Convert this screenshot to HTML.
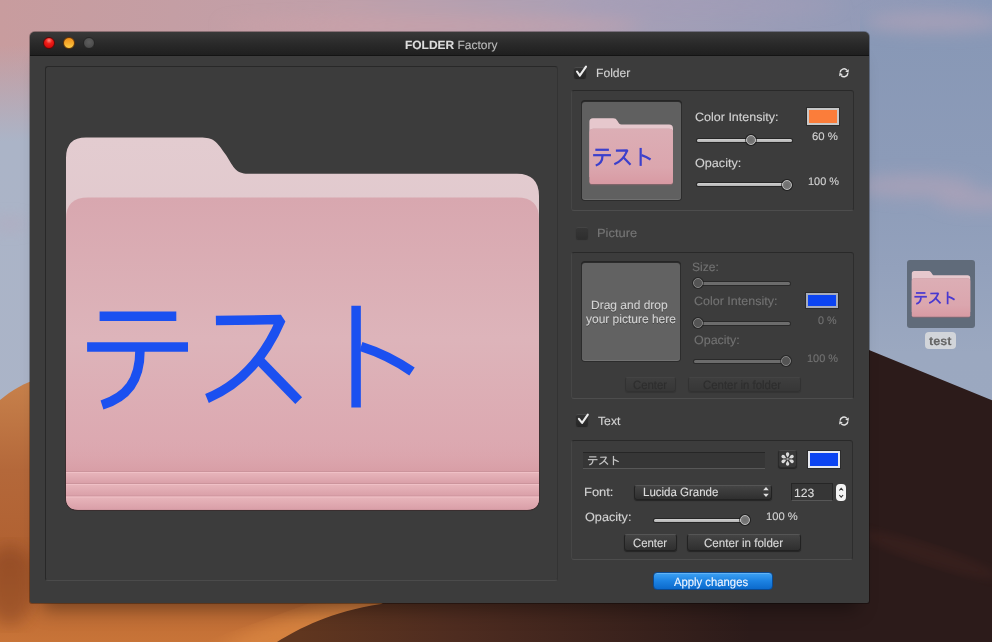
<!DOCTYPE html>
<html><head><meta charset="utf-8">
<style>
*{box-sizing:border-box;margin:0;padding:0}
html,body{width:992px;height:642px;overflow:hidden;background:#8a96b0}
body{position:relative;font-family:"Liberation Sans",sans-serif}
div{position:absolute}
.t{white-space:nowrap;text-rendering:geometricPrecision;-webkit-text-stroke:.12px currentColor}
#win{left:30px;top:32px;width:839px;height:571px;border-radius:5px 5px 2px 2px;overflow:hidden;background-color:#3c3c3c;box-shadow:0 0 0 1px rgba(0,0,0,.3),0 18px 18px -12px rgba(0,0,0,.38)}
#tb{left:0;top:0;width:839px;height:24px;background:linear-gradient(#393939,#2a2a2a 50%,#1f1f1f);border-bottom:1px solid #141414}
.tl{width:12px;height:12px;border-radius:50%;top:5px}
.grp{border:1px solid #282828;border-right-color:#333;border-bottom-color:#4b4b4b;border-radius:3px}
.grp2{border:1px solid #292929;border-right-color:#2d2d2d;border-left-color:#464646;border-bottom-color:#4d4d4d;border-radius:3px}
.cb{border-radius:2px;background:linear-gradient(#333,#262626);border-top:1px solid #4a4a4a;box-shadow:0 1px 1px rgba(0,0,0,.4)}
.btn{border-radius:3px;background:linear-gradient(#444,#2f2f2f);border:1px solid #222;border-top-color:#555;box-shadow:0 1px 1px rgba(0,0,0,.4)}
.track{height:3px;border-radius:2px;background:linear-gradient(#d0d0d0,#b4b4b4);box-shadow:0 0 0 1px rgba(20,20,20,.55)}
.knob{width:10px;height:10px;border-radius:50%;background:radial-gradient(circle at 50% 50%,#6c6c6c,#808080);border:1.5px solid #bdbdbd;box-shadow:0 0 0 1px rgba(20,20,20,.7)}
.sw{border:2px solid #c8c8c8;box-shadow:0 0 0 1px #2c2c2c}
</style></head><body>
<svg style="position:absolute;left:0;top:0" width="992" height="642" viewBox="0 0 992 642">
<defs>
 <linearGradient id="skyTop" x1="0" y1="0" x2="1" y2="0">
  <stop offset="0" stop-color="#c89c9e"/>
  <stop offset="0.35" stop-color="#c0a0aa"/>
  <stop offset="0.6" stop-color="#a9a0b6"/>
  <stop offset="1" stop-color="#8898b8"/>
 </linearGradient>
 <linearGradient id="skyFade" x1="0" y1="0" x2="0" y2="1">
  <stop offset="0" stop-color="#aab4c8" stop-opacity="0"/>
  <stop offset="0.07" stop-color="#aab4c8" stop-opacity="0"/>
  <stop offset="0.22" stop-color="#abb4c7" stop-opacity="1"/>
  <stop offset="1" stop-color="#aab4c8" stop-opacity="1"/>
 </linearGradient>
 <linearGradient id="skyFadeR" x1="0" y1="0" x2="0" y2="1">
  <stop offset="0" stop-color="#8a9ab8" stop-opacity="0"/>
  <stop offset="0.06" stop-color="#8898b6" stop-opacity="1"/>
  <stop offset="0.25" stop-color="#8c9bb8" stop-opacity="1"/>
  <stop offset="0.42" stop-color="#93a1bc" stop-opacity="1"/>
  <stop offset="0.55" stop-color="#9ba8c0" stop-opacity="1"/>
  <stop offset="1" stop-color="#9ca9c0" stop-opacity="1"/>
 </linearGradient>
 <linearGradient id="sand" gradientUnits="userSpaceOnUse" x1="0" y1="378" x2="0" y2="642">
  <stop offset="0" stop-color="#c8824c"/>
  <stop offset="0.35" stop-color="#b4683a"/>
  <stop offset="0.7" stop-color="#b06030"/>
  <stop offset="1" stop-color="#c87438"/>
 </linearGradient>
 <linearGradient id="dark" gradientUnits="userSpaceOnUse" x1="300" y1="0" x2="750" y2="0">
  <stop offset="0" stop-color="#60361f"/>
  <stop offset="0.35" stop-color="#4e2c20"/>
  <stop offset="1" stop-color="#2c1b1a"/>
 </linearGradient>
 <filter id="blur4"><feGaussianBlur stdDeviation="4"/></filter>
</defs>
<rect width="992" height="642" fill="url(#skyTop)"/>
<rect x="0" y="0" width="200" height="642" fill="url(#skyFade)"/>
<rect x="860" y="0" width="132" height="642" fill="url(#skyFadeR)"/>
<filter id="blur8"><feGaussianBlur stdDeviation="8"/></filter>
<g filter="url(#blur8)" fill="#b8a4b8" opacity=".55">
 <ellipse cx="10" cy="224" rx="18" ry="5"/>
 <ellipse cx="915" cy="186" rx="60" ry="11"/>
 <ellipse cx="980" cy="200" rx="45" ry="10"/>
 <ellipse cx="935" cy="22" rx="70" ry="11"/>
 <ellipse cx="430" cy="26" rx="210" ry="9" fill="#d0a2a8"/>
 <ellipse cx="700" cy="6" rx="140" ry="8" fill="#a49cb8"/>
</g>
<path d="M0 400 C 12 390 24 383 40 378 L 700 560 L 700 642 L 0 642 Z" fill="url(#sand)"/>
<ellipse cx="300" cy="628" rx="95" ry="16" transform="rotate(-20 300 628)" fill="#e08c44" opacity=".6" filter="url(#blur8)"/>
<ellipse cx="10" cy="585" rx="25" ry="40" fill="#7a3a1c" opacity=".45" filter="url(#blur8)"/>
<path d="M277 642 C 300 628 330 612 381 604 L 869 350 L 992 400.3 L 992 642 Z" fill="url(#dark)"/>
<ellipse cx="930" cy="555" rx="70" ry="10" transform="rotate(18 930 555)" fill="#4a2820" opacity=".35" filter="url(#blur4)"/>
</svg>
<div id="win">
<div id="tb">
<div class="tl" style="left:13px;background:radial-gradient(circle at 50% 25%,#ff8a80 0,#f0201a 35%,#d80c0c 75%);border:1px solid #5a0808"></div>
<div class="tl" style="left:33px;background:linear-gradient(#f0901c,#f8b030 60%,#fcd04a);border:1px solid #6a3808"></div>
<div class="tl" style="left:53px;background:radial-gradient(circle at 50% 40%,#5e5e5e,#4a4a4a 80%);border:1px solid #262626"></div>
</div>
</div>
<div class="t" style="left:405.40px;top:39.00px;font-size:12px;line-height:12px;color:#dcdcdc;font-weight:400;transform:scaleX(0.9967);transform-origin:0 0;"><b>FOLDER</b>&nbsp;<span style="font-weight:400;color:#bcbcbc">Factory</span></div>
<div class="grp" style="left:45px;top:66px;width:513px;height:515px;"></div>
<svg style="position:absolute;left:0;top:0" width="992" height="642" viewBox="0 0 992 642">
<defs>
 <linearGradient id="fback" x1="0" y1="0" x2="0" y2="1"><stop offset="0" stop-color="#e3ccd0"/><stop offset="1" stop-color="#dcc0c6"/></linearGradient>
 <linearGradient id="ffront" x1="0" y1="0" x2="0" y2="1"><stop offset="0" stop-color="#d8a7af"/><stop offset="0.45" stop-color="#ddb4ba"/><stop offset="0.8" stop-color="#dca8b0"/><stop offset="1" stop-color="#e0a6ae"/></linearGradient>
</defs>
<path d="M66 158 Q66 137.6 86 137.6 H200 C214 137.6 216 141 226 155 C234 168 236 173.7 248 173.7 H517 Q539 173.7 539 196 V495 H66 Z" fill="url(#fback)"/>
<path d="M65 400 H540 V498 Q540 510.9 527 510.9 H78 Q65 510.9 65 497 Z" fill="#3a2a2c" opacity=".8"/>
<path d="M66 219 Q66 197.5 88 197.5 H517 Q539 197.5 539 219 V498 Q539 509.7 527 509.7 H78 Q66 509.7 66 497 Z" fill="url(#ffront)"/>
<linearGradient id="band" x1="0" y1="0" x2="0" y2="1"><stop offset="0" stop-color="#e8b6bc"/><stop offset="1" stop-color="#d99ea7"/></linearGradient>
<linearGradient id="band0" x1="0" y1="0" x2="0" y2="1"><stop offset="0" stop-color="#dca8b0" stop-opacity="0"/><stop offset="1" stop-color="#d89ea6"/></linearGradient>
<clipPath id="fclip"><path d="M66 219 Q66 197.5 88 197.5 H517 Q539 197.5 539 219 V498 Q539 509.7 527 509.7 H78 Q66 509.7 66 497 Z"/></clipPath>
<g clip-path="url(#fclip)">
<rect x="66" y="440" width="473" height="31.5" fill="url(#band0)"/>
<rect x="66" y="472" width="473" height="12" fill="url(#band)"/>
<rect x="66" y="484" width="473" height="12.5" fill="url(#band)"/>
<rect x="66" y="496.5" width="473" height="13.5" fill="url(#band)"/>
<g stroke="#cc949c" stroke-width="1"><path d="M66 471.5 H539"/><path d="M66 483.5 H539"/><path d="M66 496 H539"/></g>
<g stroke="#f0c0c6" stroke-width="1"><path d="M66 472.5 H539"/><path d="M66 484.5 H539"/><path d="M66 497 H539"/></g>
</g>
<g fill="none" stroke="#1b50f0" stroke-width="9.5" stroke-linecap="butt"><path d="M99.6 316.3 H176.3"/><path d="M87.1 346.9 H188"/><path d="M140 350 C140 381 127 397 102 405"/><path stroke-linejoin="bevel" d="M215.9 320.6 L281 319.6 C265 357 242 384 207 398.5"/><path d="M259.5 360.4 L298.7 400.6"/><path d="M356.1 305.8 V407.5"/><path d="M361 346.5 Q 388 355 412 371.5"/></g>
</svg>
<div class="cb" style="left:574.4px;top:66.8px;width:11.600000000000023px;height:11.400000000000006px;"></div>
<div class="t" style="left:595.79px;top:66.90px;font-size:12px;line-height:12px;color:#d2d2d2;font-weight:400;transform:scaleX(1.0088);transform-origin:0 0;">Folder</div>
<div class="grp2" style="left:571px;top:90px;width:282.5px;height:121px;"></div>
<div class="" style="left:582px;top:101.5px;width:98.5px;height:98.5px;background:#606060;border-radius:3px;box-shadow:0 0 0 1px #2c2c2c, 0 -1px 0 1px #262626, inset 0 -1px 0 rgba(255,255,255,.1)"></div>
<div class="t" style="left:694.50px;top:111.30px;font-size:12px;line-height:12px;color:#d2d2d2;font-weight:400;transform:scaleX(1.0432);transform-origin:0 0;">Color Intensity:</div>
<div class="sw" style="left:807px;top:107.7px;width:32px;height:17.299999999999997px;background:#fb7d3a"></div>
<div class="track" style="left:696.5px;top:138.5px;width:95.10000000000002px;"></div>
<div class="knob" style="left:746.3px;top:135px;"></div>
<div class="t" style="left:811.80px;top:131.60px;font-size:11px;line-height:11px;color:#d2d2d2;font-weight:400;transform:scaleX(1.0320);transform-origin:0 0;">60 %</div>
<div class="t" style="left:694.50px;top:156.90px;font-size:12px;line-height:12px;color:#d2d2d2;font-weight:400;transform:scaleX(1.0523);transform-origin:0 0;">Opacity:</div>
<div class="track" style="left:696.5px;top:183.2px;width:94.5px;"></div>
<div class="knob" style="left:781.5px;top:179.7px;"></div>
<div class="t" style="left:808.41px;top:176.80px;font-size:11px;line-height:11px;color:#d2d2d2;font-weight:400;transform:scaleX(0.9933);transform-origin:0 0;">100 %</div>
<div class="cb" style="left:576px;top:227px;width:12px;height:12px;opacity:.6"></div>
<div class="t" style="left:596.72px;top:226.90px;font-size:12px;line-height:12px;color:#767676;font-weight:400;transform:scaleX(1.0750);transform-origin:0 0;">Picture</div>
<div class="grp2" style="left:571px;top:251.5px;width:282.5px;height:147.5px;"></div>
<div class="" style="left:582px;top:262.5px;width:98px;height:98.5px;background:#626262;border-radius:3px;box-shadow:0 0 0 1px #2c2c2c, 0 -1px 0 1px #262626, inset 0 -1px 0 rgba(255,255,255,.1)"></div>
<div class="t" style="left:591.40px;top:298.90px;font-size:12px;line-height:12px;color:#d2d2d2;font-weight:400;transform:scaleX(0.9987);transform-origin:0 0;text-shadow:0 1px 0 rgba(0,0,0,.35)">Drag and drop</div>
<div class="t" style="left:585.50px;top:312.70px;font-size:12px;line-height:12px;color:#d2d2d2;font-weight:400;transform:scaleX(0.9978);transform-origin:0 0;text-shadow:0 1px 0 rgba(0,0,0,.35)">your picture here</div>
<div class="t" style="left:691.50px;top:261.30px;font-size:12px;line-height:12px;color:#727272;font-weight:400;transform:scaleX(1.0038);transform-origin:0 0;">Size:</div>
<div class="track" style="left:694px;top:281.5px;width:96px;background:#6c6c6c;box-shadow:0 0 0 1px rgba(20,20,20,.45)"></div>
<div class="knob" style="left:693.4px;top:278px;background:#545454;border-color:#868686;box-shadow:0 0 0 1px rgba(20,20,20,.5)"></div>
<div class="t" style="left:693.60px;top:295.20px;font-size:12px;line-height:12px;color:#727272;font-weight:400;transform:scaleX(1.0420);transform-origin:0 0;">Color Intensity:</div>
<div class="sw" style="left:806px;top:293px;width:31.5px;height:15px;background:#0c44f2;border-color:#a6acbc"></div>
<div class="track" style="left:694px;top:321.9px;width:96px;background:#6c6c6c;box-shadow:0 0 0 1px rgba(20,20,20,.45)"></div>
<div class="knob" style="left:693.4px;top:318.4px;background:#545454;border-color:#868686;box-shadow:0 0 0 1px rgba(20,20,20,.5)"></div>
<div class="t" style="left:817.80px;top:315.90px;font-size:11px;line-height:11px;color:#727272;font-weight:400;transform:scaleX(0.9789);transform-origin:0 0;">0 %</div>
<div class="t" style="left:693.60px;top:334.30px;font-size:12px;line-height:12px;color:#727272;font-weight:400;transform:scaleX(1.0386);transform-origin:0 0;">Opacity:</div>
<div class="track" style="left:694px;top:359.5px;width:96px;background:#6c6c6c;box-shadow:0 0 0 1px rgba(20,20,20,.45)"></div>
<div class="knob" style="left:780.6px;top:356px;background:#545454;border-color:#868686;box-shadow:0 0 0 1px rgba(20,20,20,.5)"></div>
<div class="t" style="left:807.21px;top:353.80px;font-size:11px;line-height:11px;color:#727272;font-weight:400;transform:scaleX(0.9933);transform-origin:0 0;">100 %</div>
<div class="btn" style="left:624.7px;top:376.6px;width:51.299999999999955px;height:15.899999999999977px;opacity:.35"></div>
<div class="btn" style="left:687.5px;top:376.6px;width:113.10000000000002px;height:15.899999999999977px;opacity:.35"></div>
<div class="t" style="left:633.30px;top:378.80px;font-size:12px;line-height:12px;color:#2e2e2e;font-weight:400;transform:scaleX(0.9432);transform-origin:0 0;">Center</div>
<div class="t" style="left:703.20px;top:378.80px;font-size:12px;line-height:12px;color:#2e2e2e;font-weight:400;transform:scaleX(0.9512);transform-origin:0 0;">Center in folder</div>
<div class="cb" style="left:576.3px;top:414px;width:11.800000000000068px;height:11.600000000000023px;"></div>
<div class="t" style="left:597.80px;top:414.60px;font-size:12px;line-height:12px;color:#d2d2d2;font-weight:400;transform:scaleX(1.0182);transform-origin:0 0;">Text</div>
<div class="grp2" style="left:571px;top:440px;width:282px;height:120px;"></div>
<div class="" style="left:582.7px;top:451.6px;width:182.29999999999995px;height:17.899999999999977px;background:#363636;border-top:1px solid #262626;border-bottom:1px solid #575757"></div>
<div class="" style="left:778px;top:450px;width:19px;height:18px;border-radius:3px;background:#383838;border:1px solid #2a2a2a;border-top-color:#4a4a4a;box-shadow:0 1px 1px rgba(0,0,0,.4)"></div>
<div class="sw" style="left:808px;top:450.7px;width:32px;height:17.30000000000001px;background:#0c44f2;border-color:#e6e8f0"></div>
<div class="t" style="left:583.52px;top:486.10px;font-size:12px;line-height:12px;color:#d2d2d2;font-weight:400;transform:scaleX(1.0769);transform-origin:0 0;">Font:</div>
<div class="btn" style="left:634.1px;top:484.5px;width:137.5px;height:15.899999999999977px;"></div>
<div class="t" style="left:642.64px;top:485.90px;font-size:12px;line-height:12px;color:#dcdcdc;font-weight:400;transform:scaleX(0.9570);transform-origin:0 0;">Lucida Grande</div>
<div class="" style="left:791.2px;top:483.4px;width:41.799999999999955px;height:18.0px;background:#363636;border:1px solid #262626;border-bottom-color:#575757"></div>
<div class="t" style="left:794.28px;top:487.00px;font-size:12px;line-height:12px;color:#d8d8d8;font-weight:400;transform:scaleX(1.0158);transform-origin:0 0;">123</div>
<div class="" style="left:836.3px;top:484.4px;width:9.700000000000045px;height:16.30000000000001px;background:#f4f4f4;border-radius:4px"></div>
<div class="t" style="left:584.60px;top:511.30px;font-size:12px;line-height:12px;color:#d2d2d2;font-weight:400;transform:scaleX(1.0545);transform-origin:0 0;">Opacity:</div>
<div class="track" style="left:654.1px;top:518.9px;width:94.89999999999998px;"></div>
<div class="knob" style="left:739.8px;top:515.4px;"></div>
<div class="t" style="left:765.78px;top:512.30px;font-size:11px;line-height:11px;color:#d2d2d2;font-weight:400;transform:scaleX(1.0167);transform-origin:0 0;">100 %</div>
<div class="btn" style="left:624.2px;top:534.4px;width:52.5px;height:16.399999999999977px;"></div>
<div class="btn" style="left:686.5px;top:534.4px;width:114.5px;height:16.399999999999977px;"></div>
<div class="t" style="left:632.90px;top:536.90px;font-size:12px;line-height:12px;color:#d8d8d8;font-weight:400;transform:scaleX(0.9459);transform-origin:0 0;">Center</div>
<div class="t" style="left:703.80px;top:537.00px;font-size:12px;line-height:12px;color:#d8d8d8;font-weight:400;transform:scaleX(0.9643);transform-origin:0 0;">Center in folder</div>
<div class="" style="left:653.2px;top:572.3px;width:119.39999999999998px;height:18.0px;border-radius:4px;background:linear-gradient(#3ea2f4,#1c82e2 50%,#0c6acc);border:1px solid #0b4a92;box-shadow:inset 0 1px 0 rgba(255,255,255,.2)"></div>
<div class="t" style="left:674.30px;top:575.90px;font-size:12px;line-height:12px;color:#eef4ff;font-weight:400;transform:scaleX(0.9407);transform-origin:0 0;">Apply changes</div>
<svg style="position:absolute;left:0;top:0" width="992" height="642" viewBox="0 0 992 642">
<defs><linearGradient id="sfa" x1="0" y1="0" x2="0" y2="1"><stop offset="0" stop-color="#dcaeb5"/><stop offset="0.7" stop-color="#dba6ae"/><stop offset="1" stop-color="#d89aa3"/></linearGradient></defs>
<g transform="translate(589.4,118.2) scale(0.1767) translate(-66,-137.6)">
<path d="M66 158 Q66 137.6 86 137.6 H200 C214 137.6 216 141 226 155 C234 168 236 173.7 248 173.7 H517 Q539 173.7 539 196 V470 H66 Z" fill="#e6c8cd"/>
<path d="M66 219 Q66 197.5 88 197.5 H517 Q539 197.5 539 219 V498 Q539 517 520 517 H85 Q66 517 66 498 Z" fill="#9a6a72" opacity=".55"/>
<path d="M66 219 Q66 197.5 88 197.5 H517 Q539 197.5 539 219 V498 Q539 509.7 527 509.7 H78 Q66 509.7 66 497 Z" fill="url(#sfa)"/>
<g fill="none" stroke="#3b3fcc" stroke-width="12.5"><path d="M99.6 316.3 H176.3"/><path d="M87.1 346.9 H188"/><path d="M140 350 C140 381 127 397 102 405"/><path stroke-linejoin="bevel" d="M215.9 320.6 L281 319.6 C265 357 242 384 207 398.5"/><path d="M259.5 360.4 L298.7 400.6"/><path d="M356.1 305.8 V407.5"/><path d="M361 346.5 Q 388 355 412 371.5"/></g>
</g></svg>
<div class="" style="left:907px;top:260px;width:68px;height:68px;background:#606b7a;border-radius:3px"></div>
<svg style="position:absolute;left:0;top:0" width="992" height="642" viewBox="0 0 992 642">
<defs><linearGradient id="sfb" x1="0" y1="0" x2="0" y2="1"><stop offset="0" stop-color="#dcaeb5"/><stop offset="0.7" stop-color="#dba6ae"/><stop offset="1" stop-color="#d89aa3"/></linearGradient></defs>
<g transform="translate(911.8,270.9) scale(0.1235) translate(-66,-137.6)">
<path d="M66 158 Q66 137.6 86 137.6 H200 C214 137.6 216 141 226 155 C234 168 236 173.7 248 173.7 H517 Q539 173.7 539 196 V470 H66 Z" fill="#e6c8cd"/>
<path d="M66 219 Q66 197.5 88 197.5 H517 Q539 197.5 539 219 V498 Q539 517 520 517 H85 Q66 517 66 498 Z" fill="#9a6a72" opacity=".55"/>
<path d="M66 219 Q66 197.5 88 197.5 H517 Q539 197.5 539 219 V498 Q539 509.7 527 509.7 H78 Q66 509.7 66 497 Z" fill="url(#sfb)"/>
<g fill="none" stroke="#4838d0" stroke-width="14"><path d="M99.6 316.3 H176.3"/><path d="M87.1 346.9 H188"/><path d="M140 350 C140 381 127 397 102 405"/><path stroke-linejoin="bevel" d="M215.9 320.6 L281 319.6 C265 357 242 384 207 398.5"/><path d="M259.5 360.4 L298.7 400.6"/><path d="M356.1 305.8 V407.5"/><path d="M361 346.5 Q 388 355 412 371.5"/></g>
</g></svg>
<div class="" style="left:925px;top:332.2px;width:31px;height:16.80000000000001px;background:#d2d5da;border-radius:4px"></div>
<div class="t" style="left:928.90px;top:334.90px;font-size:12px;line-height:12px;color:#666;font-weight:700;transform:scaleX(1.0500);transform-origin:0 0;">test</div>
<svg style="position:absolute;left:0;top:0" width="992" height="642" viewBox="0 0 992 642"><g fill="none" stroke="#ececec" stroke-width="2.1" stroke-linecap="round" stroke-linejoin="round"><path d="M577 71.5 L579.8 75.6 L586 66.6"/><path d="M578.9 418.8 L582.1 422.9 L587.8 414.6"/></g><g fill="none" stroke="#e4e4e4" stroke-width="1.45"><path d="M840.11 72.46 A3.9 3.9 0 0 1 846.90 70.19"/><path d="M847.89 73.14 A3.9 3.9 0 0 1 841.10 75.41"/></g><g fill="#e4e4e4"><path d="M848.48 72.76 L848.90 69.28 L845.26 71.38 Z"/><path d="M839.52 72.84 L839.10 76.32 L842.74 74.22 Z"/></g><g fill="none" stroke="#e4e4e4" stroke-width="1.45"><path d="M840.11 420.66 A3.9 3.9 0 0 1 846.90 418.39"/><path d="M847.89 421.34 A3.9 3.9 0 0 1 841.10 423.61"/></g><g fill="#e4e4e4"><path d="M848.48 420.96 L848.90 417.48 L845.26 419.58 Z"/><path d="M839.52 421.04 L839.10 424.52 L842.74 422.42 Z"/></g><g fill="#dadada"><path transform="translate(787.6,459) rotate(0)" d="M0 -1.4 C-0.5 -2.6 -1.7 -3.8 -1.7 -5.1 A1.7 1.7 0 0 1 1.7 -5.1 C1.7 -3.8 0.5 -2.6 0 -1.4 Z"/><path transform="translate(787.6,459) rotate(62)" d="M0 -1.4 C-0.5 -2.6 -1.7 -3.8 -1.7 -5.1 A1.7 1.7 0 0 1 1.7 -5.1 C1.7 -3.8 0.5 -2.6 0 -1.4 Z"/><path transform="translate(787.6,459) rotate(118)" d="M0 -1.4 C-0.5 -2.6 -1.7 -3.8 -1.7 -5.1 A1.7 1.7 0 0 1 1.7 -5.1 C1.7 -3.8 0.5 -2.6 0 -1.4 Z"/><path transform="translate(787.6,459) rotate(180)" d="M0 -1.4 C-0.5 -2.6 -1.7 -3.8 -1.7 -5.1 A1.7 1.7 0 0 1 1.7 -5.1 C1.7 -3.8 0.5 -2.6 0 -1.4 Z"/><path transform="translate(787.6,459) rotate(242)" d="M0 -1.4 C-0.5 -2.6 -1.7 -3.8 -1.7 -5.1 A1.7 1.7 0 0 1 1.7 -5.1 C1.7 -3.8 0.5 -2.6 0 -1.4 Z"/><path transform="translate(787.6,459) rotate(298)" d="M0 -1.4 C-0.5 -2.6 -1.7 -3.8 -1.7 -5.1 A1.7 1.7 0 0 1 1.7 -5.1 C1.7 -3.8 0.5 -2.6 0 -1.4 Z"/><circle cx="787.6" cy="459" r="1.3" fill="#9a9a9a"/></g><g fill="#dedede"><path d="M763.2 490.2 L766 487 L768.8 490.2 Z"/><path d="M763.2 493.8 L766 497 L768.8 493.8 Z"/></g><g fill="none" stroke="#333" stroke-width="1.1"><path d="M839.3 490.5 L841.2 488.3 L843.1 490.5"/><path d="M839.3 495 L841.2 497.2 L843.1 495"/></g><g transform="translate(587.8,455.9) scale(0.095,0.091) translate(-86,-305.8)" fill="none" stroke="#c4c4c4" stroke-width="13"><path d="M99.6 316.3 H176.3"/><path d="M87.1 346.9 H188"/><path d="M140 350 C140 381 127 397 102 405"/><path stroke-linejoin="bevel" d="M215.9 320.6 L281 319.6 C265 357 242 384 207 398.5"/><path d="M259.5 360.4 L298.7 400.6"/><path d="M356.1 305.8 V407.5"/><path d="M361 346.5 Q 388 355 412 371.5"/></g></svg>
</body></html>
